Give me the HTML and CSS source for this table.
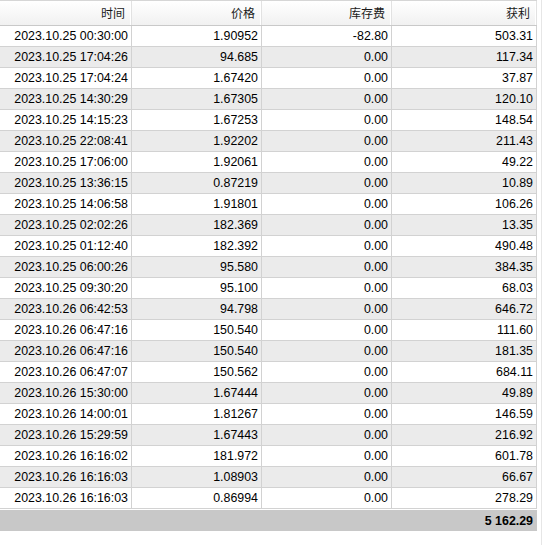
FILE: index.html
```html
<!DOCTYPE html>
<html>
<head>
<meta charset="utf-8">
<link rel="stylesheet" href="styles.css">
</head>
<body>
<div class="frame">
  <div class="grid">
    <div class="row head">
      <div class="cell">时间</div>
      <div class="cell">价格</div>
      <div class="cell">库存费</div>
      <div class="cell">获利</div>
    </div>
    <div class="row"><div class="cell">2023.10.25 00:30:00</div><div class="cell">1.90952</div><div class="cell">-82.80</div><div class="cell">503.31</div></div>
    <div class="row alt"><div class="cell">2023.10.25 17:04:26</div><div class="cell">94.685</div><div class="cell">0.00</div><div class="cell">117.34</div></div>
    <div class="row"><div class="cell">2023.10.25 17:04:24</div><div class="cell">1.67420</div><div class="cell">0.00</div><div class="cell">37.87</div></div>
    <div class="row alt"><div class="cell">2023.10.25 14:30:29</div><div class="cell">1.67305</div><div class="cell">0.00</div><div class="cell">120.10</div></div>
    <div class="row"><div class="cell">2023.10.25 14:15:23</div><div class="cell">1.67253</div><div class="cell">0.00</div><div class="cell">148.54</div></div>
    <div class="row alt"><div class="cell">2023.10.25 22:08:41</div><div class="cell">1.92202</div><div class="cell">0.00</div><div class="cell">211.43</div></div>
    <div class="row"><div class="cell">2023.10.25 17:06:00</div><div class="cell">1.92061</div><div class="cell">0.00</div><div class="cell">49.22</div></div>
    <div class="row alt"><div class="cell">2023.10.25 13:36:15</div><div class="cell">0.87219</div><div class="cell">0.00</div><div class="cell">10.89</div></div>
    <div class="row"><div class="cell">2023.10.25 14:06:58</div><div class="cell">1.91801</div><div class="cell">0.00</div><div class="cell">106.26</div></div>
    <div class="row alt"><div class="cell">2023.10.25 02:02:26</div><div class="cell">182.369</div><div class="cell">0.00</div><div class="cell">13.35</div></div>
    <div class="row"><div class="cell">2023.10.25 01:12:40</div><div class="cell">182.392</div><div class="cell">0.00</div><div class="cell">490.48</div></div>
    <div class="row alt"><div class="cell">2023.10.25 06:00:26</div><div class="cell">95.580</div><div class="cell">0.00</div><div class="cell">384.35</div></div>
    <div class="row"><div class="cell">2023.10.25 09:30:20</div><div class="cell">95.100</div><div class="cell">0.00</div><div class="cell">68.03</div></div>
    <div class="row alt"><div class="cell">2023.10.26 06:42:53</div><div class="cell">94.798</div><div class="cell">0.00</div><div class="cell">646.72</div></div>
    <div class="row"><div class="cell">2023.10.26 06:47:16</div><div class="cell">150.540</div><div class="cell">0.00</div><div class="cell">111.60</div></div>
    <div class="row alt"><div class="cell">2023.10.26 06:47:16</div><div class="cell">150.540</div><div class="cell">0.00</div><div class="cell">181.35</div></div>
    <div class="row"><div class="cell">2023.10.26 06:47:07</div><div class="cell">150.562</div><div class="cell">0.00</div><div class="cell">684.11</div></div>
    <div class="row alt"><div class="cell">2023.10.26 15:30:00</div><div class="cell">1.67444</div><div class="cell">0.00</div><div class="cell">49.89</div></div>
    <div class="row"><div class="cell">2023.10.26 14:00:01</div><div class="cell">1.81267</div><div class="cell">0.00</div><div class="cell">146.59</div></div>
    <div class="row alt"><div class="cell">2023.10.26 15:29:59</div><div class="cell">1.67443</div><div class="cell">0.00</div><div class="cell">216.92</div></div>
    <div class="row"><div class="cell">2023.10.26 16:16:02</div><div class="cell">181.972</div><div class="cell">0.00</div><div class="cell">601.78</div></div>
    <div class="row alt"><div class="cell">2023.10.26 16:16:03</div><div class="cell">1.08903</div><div class="cell">0.00</div><div class="cell">66.67</div></div>
    <div class="row"><div class="cell">2023.10.26 16:16:03</div><div class="cell">0.86994</div><div class="cell">0.00</div><div class="cell">278.29</div></div>
    <div class="total"><span class="total-value">5 162.29</span></div>
  </div>
</div>
</body>
</html>
```

FILE: styles.css
```css
html, body {
  margin: 0;
  padding: 0;
  background: #ffffff;
}

.frame {
  width: 542px;
  height: 545px;
  box-sizing: border-box;
  border-right: 1px solid #e6e6e6;
}

.grid {
  width: 537px;
  font-family: "Liberation Sans", "Noto Sans CJK SC", sans-serif;
  font-size: 12.4px;
  color: #000;
}

.row {
  display: grid;
  grid-template-columns: 132px 130px 130px 145px;
  height: 21px;
  box-sizing: border-box;
  border-bottom: 1px solid #d2d2d2;
}

.row.alt {
  background: #ebebeb;
}

.cell {
  box-sizing: border-box;
  border-right: 1px solid #d2d2d2;
  padding-right: 3px;
  text-align: right;
  line-height: 20px;
  white-space: nowrap;
  overflow: hidden;
}

.row.head {
  height: 26px;
  border-top: 1px solid #d6d6d6;
  border-bottom: 1px solid #c9c9c9;
  background: linear-gradient(#ffffff, #f1f1f1);
}

.row.head .cell {
  font-family: "Noto Sans CJK SC", sans-serif;
  font-size: 12px;
  line-height: 24px;
  color: #1a1a1a;
  padding-right: 6px;
  border-right: 1px solid #e2e2e2;
  box-shadow: inset -1px 0 0 #ffffff;
}

.total {
  height: 21px;
  background: #c8c8c8;
  display: flex;
  justify-content: flex-end;
  align-items: center;
  padding-right: 4px;
  font-weight: bold;
  margin-top: 1px;
}
```
